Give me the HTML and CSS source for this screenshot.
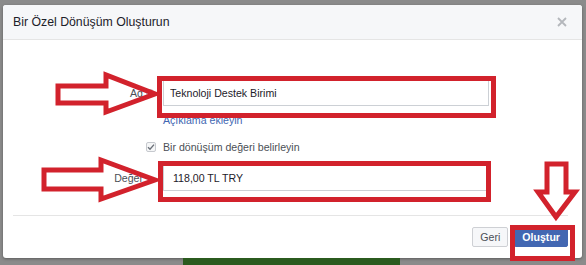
FILE: index.html
```html
<!DOCTYPE html>
<html lang="tr">
<head>
    <meta charset="UTF-8">
    <meta name="viewport" content="width=device-width, initial-scale=1.0">
    <title>Bir Özel Dönüşüm Oluşturun</title>
    <link rel="stylesheet" href="styles.css">
</head>
<body>
    <div class="page">
        <div class="dialog">
            <!-- Header -->
            <div class="dialog-header">
                <h2 class="dialog-title">Bir Özel Dönüşüm Oluşturun</h2>
                <span class="close-btn">
                    <svg width="10" height="10" viewBox="0 0 10 10"><path d="M1 1L9 9M9 1L1 9" stroke="#b4b7bc" stroke-width="1.8" fill="none"/></svg>
                </span>
            </div>

            <!-- Form -->
            <div class="dialog-body">
                <div class="row row-input">
                    <label class="row-label" for="nameInput">Ad</label>
                    <span class="row-icon"><span class="info-icon"></span></span>
                    <input class="text-input" id="nameInput" type="text" value="Teknoloji Destek Birimi">
                </div>
                <div class="row row-link">
                    <a class="add-link">Açıklama ekleyin</a>
                </div>
                <div class="row row-check">
                    <span class="row-icon">
                        <span class="checkbox">
                            <svg width="8" height="8" viewBox="0 0 8 8"><path d="M1 4.2L3 6.2L7 1.6" stroke="#6b7079" stroke-width="1.4" fill="none"/></svg>
                        </span>
                    </span>
                    <span class="check-label">Bir dönüşüm değeri belirleyin</span>
                </div>
                <div class="row row-input row-value">
                    <label class="row-label" for="valueInput">Değer</label>
                    <span class="row-icon"></span>
                    <input class="text-input value-input" id="valueInput" type="text" value="118,00 TL TRY">
                </div>
            </div>

            <!-- Footer -->
            <div class="dialog-footer">
                <button class="btn">Geri</button>
                <button class="btn btn-primary">Oluştur</button>
            </div>
        </div>
        <div class="green-bar"></div>

        <!-- Red annotation marks -->
        <svg class="marks" width="586" height="265" viewBox="0 0 586 265">
            <g fill="none" stroke="#d2222c" stroke-width="5" stroke-linejoin="miter">
                <polygon points="58,81 106,81 106,70 155,89 106,107 106,98 58,98"/>
                <polygon points="44,165 101,165 101,155 155,175 101,194 101,184 44,184"/>
                <polygon points="547,159 566,159 566,187 575,187 556,212 538,187 547,187"/>
                <rect x="159.5" y="73.5" width="334" height="37"/>
                <rect x="160.5" y="158.5" width="328" height="36"/>
                <rect x="512.5" y="222.5" width="60" height="31"/>
            </g>
        </svg>
    </div>
</body>
</html>
```

FILE: styles.css
```css
body {
    margin: 0;
    padding: 0;
    background-color: #8b8b8b;
    font-family: "Liberation Sans", Arial, sans-serif;
    overflow: hidden;
}
.page {
    position: relative;
    width: 586px;
    height: 265px;
}
.dialog {
    margin: 5px 0 0 3px;
    width: 579px;
    background: white;
    border-radius: 3px;
    box-shadow: 0 1px 3px rgba(0, 0, 0, 0.35);
    overflow: hidden;
}
.dialog-header {
    height: 34px;
    display: flex;
    align-items: center;
    justify-content: space-between;
    padding: 0 15px 0 10px;
    background-color: #f6f7f9;
    border-bottom: 1px solid #e5e5e5;
}
.dialog-title {
    margin: 0;
    font-size: 12.3px;
    font-weight: normal;
    color: #1d2129;
}
.close-btn {
    display: flex;
}
.dialog-body {
    padding: 39px 0 24px 0;
}
.row {
    display: grid;
    grid-template-columns: 140px 20px 326px;
    align-items: center;
    font-size: 10.6px;
}
.row-input {
    height: 27px;
}
.row-link {
    margin-top: 7px;
    height: 14px;
}
.row-check {
    margin-top: 13px;
    height: 14px;
}
.row-value {
    margin-top: 10px;
}
.row-label {
    grid-column: 1;
    text-align: right;
    color: #4b4f56;
}
.row-icon {
    grid-column: 2;
    display: flex;
    align-items: center;
    padding-left: 3px;
}
.info-icon {
    width: 8px;
    height: 8px;
    border-radius: 50%;
    background-color: #c4c7cc;
}
.text-input {
    grid-column: 3;
    box-sizing: border-box;
    height: 27px;
    width: 326px;
    margin: 0;
    padding: 0 6px;
    border: 1px solid #ccd0d5;
    font-family: "Liberation Sans", Arial, sans-serif;
    font-size: 10.6px;
    color: #1d2129;
    outline: none;
}
.value-input {
    padding-left: 9px;
}
.add-link {
    grid-column: 3;
    color: #4267b2;
    cursor: pointer;
}
.checkbox {
    box-sizing: border-box;
    width: 10px;
    height: 10px;
    display: flex;
    align-items: center;
    justify-content: center;
    border: 1px solid #c6c9ce;
    border-radius: 2px;
    background: #f5f6f7;
}
.check-label {
    grid-column: 3;
    color: #4b4f56;
}
.dialog-footer {
    margin: 0 14px 0 10px;
    padding: 11px 0;
    border-top: 1px solid #e5e5e5;
    display: flex;
    justify-content: flex-end;
    gap: 6px;
}
.btn {
    height: 20px;
    padding: 0 7px;
    border: 1px solid #ced0d4;
    border-radius: 2px;
    background-color: #f6f7f9;
    font-family: "Liberation Sans", Arial, sans-serif;
    font-size: 10.6px;
    color: #4b4f56;
    cursor: pointer;
}
.btn-primary {
    padding: 0 7px;
    border-color: #4267b2;
    background-color: #4267b2;
    color: white;
    font-weight: bold;
}
.green-bar {
    margin-left: 183px;
    width: 217px;
    height: 8px;
    background-color: #2b5b1f;
}
.marks {
    position: absolute;
    top: 0;
    left: 0;
    pointer-events: none;
}
```
